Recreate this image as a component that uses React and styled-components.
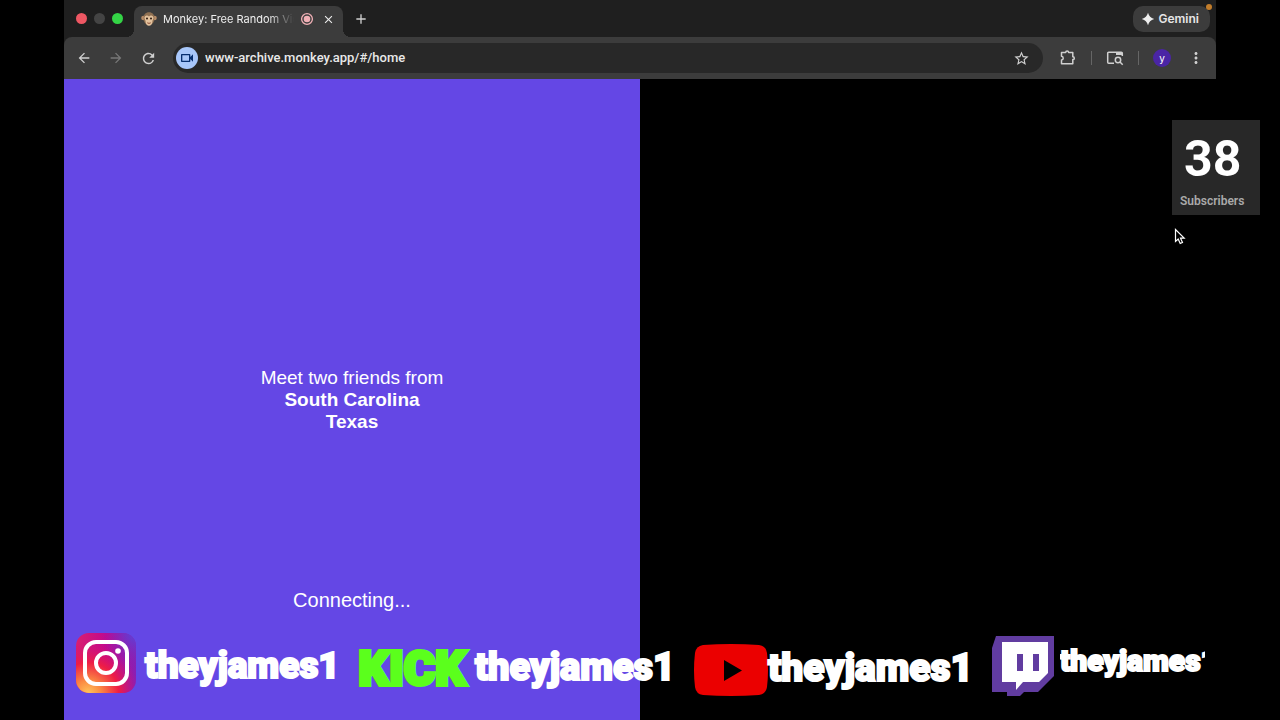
import styled, { createGlobalStyle } from "styled-components";
import {
  MdArrowBack,
  MdArrowForward,
  MdRefresh,
  MdStarOutline,
  MdMoreVert,
  MdOutlineVideocam,
  MdClose,
  MdAdd,
} from "react-icons/md";

const GlobalStyle = createGlobalStyle`
  * {
    box-sizing: border-box;
  }

  body {
    margin: 0;
    background: #000;
    color: #fff;
    font-family: Inter, "Liberation Sans", sans-serif;
  }

  button,
  input {
    font: inherit;
    color: inherit;
  }
`;

const Stage = styled.div`
  position: relative;
  min-height: 100vh;
  padding: 0 5%;
  overflow: hidden;
`;

const Browser = styled.div`
  display: flex;
  flex-direction: column;
  min-height: 100vh;
  background: #1f1f1f;
`;

const TabStrip = styled.header`
  display: flex;
  align-items: flex-end;
  height: 37px;
  padding: 0 6px 0 12px;
`;

const Lights = styled.div`
  display: flex;
  align-self: center;
  gap: 7px;
  margin-right: 11px;
`;

const Light = styled.span`
  width: 11px;
  height: 11px;
  border-radius: 50%;
  background: ${({ color }) => color};
`;

const Tab = styled.div`
  position: relative;
  display: flex;
  align-items: center;
  width: 209px;
  height: 31px;
  padding: 0 7px 5px;
  border-radius: 8px 8px 0 0;
  background: #3c3c3c;

  &::before,
  &::after {
    content: "";
    position: absolute;
    bottom: 0;
    width: 8px;
    height: 8px;
  }

  &::before {
    right: 100%;
    background: radial-gradient(circle at 0 0, transparent 8px, #3c3c3c 8px);
  }

  &::after {
    left: 100%;
    background: radial-gradient(circle at 100% 0, transparent 8px, #3c3c3c 8px);
  }
`;

const TabTitle = styled.span`
  flex: 1;
  margin: 0 6px;
  overflow: hidden;
  white-space: nowrap;
  font-size: 11px;
  line-height: 16px;
  color: #eee;
  mask-image: linear-gradient(to right, #000 80%, transparent);
`;

const IconButton = styled.button`
  display: flex;
  align-items: center;
  justify-content: center;
  width: ${({ $size }) => $size || 24}px;
  height: ${({ $size }) => $size || 24}px;
  padding: 0;
  border: 0;
  border-radius: 50%;
  background: none;
  color: ${({ disabled }) => (disabled ? "#777" : "#d0d0d0")};
`;

const CloseButton = styled(IconButton)`
  margin-left: 6px;
  color: #eee;
`;

const Gemini = styled.button`
  position: relative;
  display: flex;
  align-items: center;
  gap: 3px;
  align-self: center;
  height: 26px;
  margin-left: auto;
  padding: 0 11px 0 8px;
  border: 0;
  border-radius: 10px;
  background: #3c3c3c;
  font-size: 12px;
  font-weight: 600;
  color: #e6e6e6;
`;

const Dot = styled.span`
  position: absolute;
  top: -2px;
  right: -2px;
  width: 6px;
  height: 6px;
  border-radius: 50%;
  background: #c27d2b;
`;

const Toolbar = styled.nav`
  display: flex;
  align-items: center;
  height: 42px;
  padding: 0 8px;
  border-radius: 8px 8px 0 0;
  background: #3c3c3c;
`;

const NavButtons = styled.div`
  display: flex;
  gap: 8px;
  margin-right: 13px;
`;

const Omnibox = styled.div`
  display: flex;
  flex: 1;
  align-items: center;
  height: 30px;
  padding: 0 10px 0 3px;
  border-radius: 15px;
  background: #282828;
`;

const CameraChip = styled.button`
  display: flex;
  align-items: center;
  justify-content: center;
  width: 22px;
  height: 22px;
  padding: 0;
  border: 0;
  border-radius: 50%;
  background: #a8c7fa;
  color: #062e6f;
`;

const Address = styled.input`
  flex: 1;
  min-width: 0;
  margin-left: 7px;
  padding: 0;
  border: 0;
  outline: 0;
  background: none;
  font-family: Roboto, sans-serif;
  font-size: 13px;
  font-weight: 500;
  line-height: 16px;
  color: #e8e8e8;
`;

const Actions = styled.div`
  display: flex;
  align-items: center;
  gap: 11px;
  margin-left: 13px;
`;

const Divider = styled.span`
  width: 1px;
  height: 14px;
  background: #666;
`;

const Avatar = styled.button`
  width: 18px;
  height: 18px;
  margin: 0 2px 0 3px;
  padding: 0;
  border: 0;
  border-radius: 50%;
  background: #4a25a5;
  font-size: 10px;
  line-height: 16px;
  color: #fff;
`;

const Panels = styled.main`
  display: grid;
  flex: 1;
  grid-template-columns: 1fr 1fr;
`;

const MatchPanel = styled.section`
  display: grid;
  grid-template-rows: 1fr auto 1fr;
  background: #6447e5;
  font-family: "Liberation Sans", Arial, sans-serif;
  font-size: 19px;
  line-height: 22px;
  text-align: center;
`;

const Meet = styled.p`
  grid-row: 2;
  margin: 0;

  strong {
    display: block;
  }
`;

const Status = styled.p`
  grid-row: 3;
  align-self: end;
  margin: 0;
  padding-bottom: 109px;
  font-size: 20px;
`;

const VideoPanel = styled.section`
  background: #000;
`;

const Socials = styled.footer`
  position: absolute;
  right: 5%;
  bottom: 15px;
  left: 5%;
  display: flex;
  align-items: flex-start;
  justify-content: space-between;
  height: 72px;
  padding: 0 11px 0 12px;
`;

const Social = styled.div`
  display: flex;
  align-items: center;
  gap: ${({ $gap }) => $gap}px;
  padding-top: ${({ $drop }) => $drop || 0}px;
`;

const Handle = styled.span`
  padding: ${({ $pad }) => $pad};
  font-family: Roboto, sans-serif;
  font-size: ${({ $size }) => $size}px;
  font-weight: 900;
  line-height: 48px;
  -webkit-text-stroke: 2px #fff;
`;

const ClippedHandle = styled(Handle)`
  width: 145px;
  overflow: hidden;
`;

const Kick = styled.span`
  font-family: Roboto, sans-serif;
  font-size: 48px;
  font-weight: 900;
  line-height: 48px;
  color: #5bff1c;
  -webkit-text-stroke: 4px #5bff1c;
`;

const Counter = styled.aside`
  position: absolute;
  top: 120px;
  right: 20px;
  width: 88px;
  height: 95px;
  padding: 11px 8px 0;
  background: #282828;
  font-family: Roboto, sans-serif;
`;

const Count = styled.div`
  padding-left: 4px;
  font-size: 50px;
  font-weight: 700;
  line-height: 56px;
`;

const CountLabel = styled.div`
  margin-top: 6px;
  font-size: 12px;
  font-weight: 600;
  line-height: 16px;
  color: #aaa;
`;

const Pointer = styled.svg`
  position: absolute;
  top: 228px;
  right: 94px;
`;

function MonkeyIcon() {
  return (
    <svg width="16" height="16" viewBox="0 0 16 16">
      <circle cx="2.5" cy="7" r="2.3" fill="#b98d68" />
      <circle cx="13.5" cy="7" r="2.3" fill="#b98d68" />
      <path
        d="M8 1.2c3.4 0 5.4 2.3 5.4 5.6 0 4.3-2 7.3-5.4 7.3s-5.4-3-5.4-7.3c0-3.3 2-5.6 5.4-5.6z"
        fill="#8f7052"
      />
      <path
        d="M8 5.5C6.5 3.5 3.3 4.5 3.5 7c.1 1.5 1.1 2 1.1 3.5C4.6 13 6 14.8 8 14.8s3.4-1.8 3.4-4.3c0-1.5 1-2 1.1-3.5.2-2.5-3-3.500-4.500-1.500z"
        fill="#e3c29d"
      />
      <circle cx="6" cy="7.5" r="1" fill="#2d1a10" />
      <circle cx="10" cy="7.5" r="1" fill="#2d1a10" />
      <path d="M6.3 11.8q1.7 1.2 3.4 0" stroke="#8c4a32" fill="none" />
    </svg>
  );
}

function RecordingIcon() {
  return (
    <svg width="14" height="14" viewBox="0 0 14 14">
      <circle cx="7" cy="7" r="5.4" fill="none" stroke="#f0b0b6" strokeWidth="1.3" />
      <circle cx="7" cy="7" r="3.3" fill="#f0b0b6" />
    </svg>
  );
}

function SparkIcon() {
  return (
    <svg width="14" height="14" viewBox="0 0 14 14" fill="#eee">
      <path d="M7 .8C8 4.3 9.7 6 13.2 7 9.7 8 8 9.7 7 13.2 6 9.7 4.3 8 .8 7 4.3 6 6 4.3 7 .8z" />
    </svg>
  );
}

function ExtensionIcon() {
  return (
    <svg
      width="18"
      height="18"
      viewBox="0 0 18 18"
      fill="none"
      stroke="currentColor"
      strokeWidth="1.5"
      strokeLinejoin="round"
    >
      <path d="M2.5 3.5h4.2c0-2 2.900-2 2.900 0h4.200v4.200c2 0 2 2.900 0 2.900v4.200H2.500v-3.800c2.300-.2 2.300-3.500 0-3.700z" />
    </svg>
  );
}

function SidePanelIcon() {
  return (
    <svg width="18" height="18" viewBox="0 0 18 18" fill="none" stroke="currentColor" strokeWidth="1.5">
      <path d="M8 14.2H2.700a1 1 0 0 1-1-1V4.300a1 1 0 0 1 1-1h12.600a1 1 0 0 1 1 1V7" />
      <path d="M10 3.3h6.300V6H10z" fill="currentColor" stroke="none" />
      <circle cx="12" cy="11" r="2.7" />
      <path d="M14 13l2.7 2.7" />
    </svg>
  );
}

function InstagramLogo() {
  return (
    <svg width="60" height="60" viewBox="0 0 60 60" role="img" aria-label="Instagram">
      <defs>
        <linearGradient id="ig-base" x1="0" y1="0" x2="1" y2="0">
          <stop offset="0" stopColor="#d81f70" />
          <stop offset=".5" stopColor="#c4088c" />
          <stop offset="1" stopColor="#8a1fb4" />
        </linearGradient>
        <radialGradient id="ig-warm" cx=".2" cy="1" r=".85">
          <stop offset="0" stopColor="#ffc55a" />
          <stop offset=".25" stopColor="#fb8a42" />
          <stop offset=".6" stopColor="#ee1d45" />
          <stop offset="1" stopColor="#d0107a" stopOpacity="0" />
        </radialGradient>
        <radialGradient id="ig-cool" cx="1" cy="0" r=".6">
          <stop offset="0" stopColor="#5546dd" />
          <stop offset="1" stopColor="#8a1fb4" stopOpacity="0" />
        </radialGradient>
      </defs>
      <rect width="60" height="60" rx="13" fill="url(#ig-base)" />
      <rect width="60" height="60" rx="13" fill="url(#ig-warm)" />
      <rect width="60" height="60" rx="13" fill="url(#ig-cool)" />
      <g fill="none" stroke="#fff" strokeWidth="4">
        <rect x="9" y="9" width="42" height="42" rx="11" />
        <circle cx="30" cy="30" r="10" />
      </g>
      <circle cx="42" cy="18" r="2.8" fill="#fff" />
    </svg>
  );
}

function YoutubeLogo() {
  return (
    <svg width="74" height="52" viewBox="0 0 74 52" role="img" aria-label="YouTube">
      <path d="M9 1Q37-1 65 1q7 1 8 8 2 17 0 34-1 7-8 8-28 2-56 0-7-1-8-8-2-17 0-34 1-7 8-8z" fill="#eb0000" />
      <path d="M30 16v21l18-10.5z" fill="#000" />
    </svg>
  );
}

function TwitchLogo() {
  return (
    <svg width="62" height="60" viewBox="0 0 62 60" role="img" aria-label="Twitch">
      <path d="M4 0h58v40L46 56H32l-4 4H15v-4H0V12z" fill="#613ca0" />
      <path d="M10 6h46v31l-9 9H31l-7 8v-8H10z" fill="#fff" />
      <path d="M25 18h6v17h-6zM41 18h6v17h-6z" fill="#613ca0" />
    </svg>
  );
}

export default function App() {
  return (
    <Stage>
      <GlobalStyle />
      <Browser>
        <TabStrip>
          <Lights>
            <Light color="#ee5763" />
            <Light color="#444" />
            <Light color="#34d446" />
          </Lights>
          <Tab>
            <MonkeyIcon />
            <TabTitle>Monkey: Free Random Vid</TabTitle>
            <RecordingIcon />
            <CloseButton $size={16} aria-label="Close tab">
              <MdClose size={13} />
            </CloseButton>
          </Tab>
          <IconButton $size={36} aria-label="New tab">
            <MdAdd size={16} />
          </IconButton>
          <Gemini>
            <SparkIcon />
            Gemini
            <Dot />
          </Gemini>
        </TabStrip>

        <Toolbar>
          <NavButtons>
            <IconButton aria-label="Back">
              <MdArrowBack size={16} />
            </IconButton>
            <IconButton aria-label="Forward" disabled>
              <MdArrowForward size={16} />
            </IconButton>
            <IconButton aria-label="Reload">
              <MdRefresh size={17} />
            </IconButton>
          </NavButtons>
          <Omnibox>
            <CameraChip aria-label="Camera in use">
              <MdOutlineVideocam size={16} />
            </CameraChip>
            <Address
              aria-label="Address"
              defaultValue="www-archive.monkey.app/#/home"
            />
            <IconButton aria-label="Bookmark">
              <MdStarOutline size={17} />
            </IconButton>
          </Omnibox>
          <Actions>
            <IconButton aria-label="Extensions">
              <ExtensionIcon />
            </IconButton>
            <Divider />
            <IconButton aria-label="Side panel">
              <SidePanelIcon />
            </IconButton>
            <Divider />
            <Avatar>y</Avatar>
            <IconButton aria-label="Menu">
              <MdMoreVert size={18} />
            </IconButton>
          </Actions>
        </Toolbar>

        <Panels>
          <MatchPanel>
            <Meet>
              Meet two friends from
              <strong>South Carolina</strong>
              <strong>Texas</strong>
            </Meet>
            <Status>Connecting...</Status>
          </MatchPanel>
          <VideoPanel />
        </Panels>
      </Browser>

      <Socials>
        <Social $gap={9}>
          <InstagramLogo />
          <Handle $size={37} $pad="6px 0 0">
            theyjames1
          </Handle>
        </Social>
        <Social $gap={9} $drop={10}>
          <Kick>KICK</Kick>
          <Handle $size={38} $pad="0 0 4px">
            theyjames1
          </Handle>
        </Social>
        <Social $gap={0} $drop={11}>
          <YoutubeLogo />
          <Handle $size={39} $pad="0 0 4px">
            theyjames1
          </Handle>
        </Social>
        <Social $gap={6} $drop={3}>
          <TwitchLogo />
          <ClippedHandle $size={30} $pad="0 0 10px">
            theyjames1
          </ClippedHandle>
        </Social>
      </Socials>

      <Counter>
        <Count>38</Count>
        <CountLabel>Subscribers</CountLabel>
      </Counter>
      <Pointer width="12" height="18" viewBox="0 0 12 18">
        <path
          d="M1.5 1.5v12l2.7-2.5 2 4.5 2.3-1-2-4.3h3.7z"
          fill="#000"
          stroke="#fff"
          strokeWidth="1.2"
        />
      </Pointer>
    </Stage>
  );
}
